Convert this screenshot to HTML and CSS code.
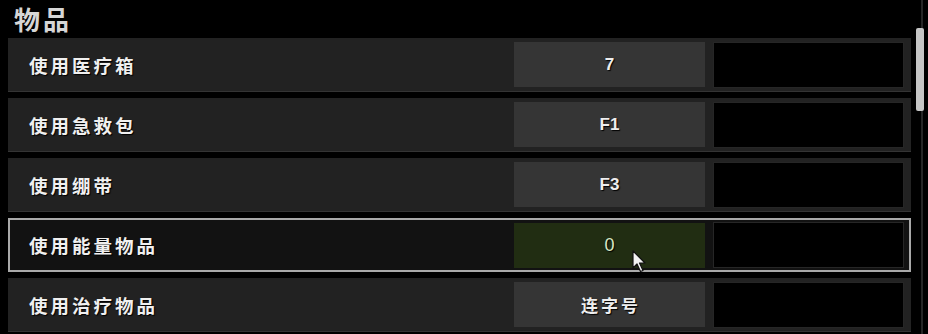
FILE: index.html
```html
<!DOCTYPE html>
<html lang="zh">
<head>
<meta charset="utf-8">
<title>物品</title>
<link rel="stylesheet" href="styles.css">
</head>
<body>
<div class="page">
  <div class="main">
    <h1 class="title">物品</h1>
    <div class="list">
      <div class="row">
        <div class="label">使用医疗箱</div>
        <div class="key">7</div>
        <div class="alt"></div>
      </div>
      <div class="row">
        <div class="label">使用急救包</div>
        <div class="key">F1</div>
        <div class="alt"></div>
      </div>
      <div class="row">
        <div class="label">使用绷带</div>
        <div class="key">F3</div>
        <div class="alt"></div>
      </div>
      <div class="row row-active">
        <div class="label">使用能量物品</div>
        <div class="key key-active">0</div>
        <div class="alt"></div>
      </div>
      <div class="row">
        <div class="label">使用治疗物品</div>
        <div class="key key-cjk">连字号</div>
        <div class="alt"></div>
      </div>
    </div>
  </div>
  <div class="scrollbar"><div class="thumb"></div></div>
</div>
<svg class="cursor" width="16" height="24" viewBox="0 0 16 24">
  <path d="M1 1 L1 18 L5 14 L8.5 21.5 L11 20.5 L7.5 13 L13 13 Z" fill="#f2f2f2" stroke="#111" stroke-width="1.2" stroke-linejoin="round"/>
</svg>
</body>
</html>
```
FILE: styles.css
```css
html, body {
  margin: 0;
  padding: 0;
  background: #000;
}
body {
  width: 928px;
  height: 334px;
  overflow: hidden;
  position: relative;
  font-family: "Noto Sans CJK SC", "Noto Sans", "Liberation Sans", sans-serif;
}
.page {
  display: flex;
  height: 334px;
}
.main {
  width: 903px;
  padding-left: 8px;
}
.title {
  margin: 0 0 0 6px;
  height: 38px;
  line-height: 38px;
  font-size: 26px;
  font-weight: 700;
  letter-spacing: 3px;
  color: #d6d6d6;
}
.list {
  display: flex;
  flex-direction: column;
  gap: 6px;
}
.row {
  box-sizing: border-box;
  height: 54px;
  display: flex;
  align-items: center;
  padding: 0 7px 0 21px;
  background: #222222;
  border-bottom: 1px solid #343434;
}
.row-active {
  background: #121212;
  border: 2px solid #a9a9a9;
  padding-left: 19px;
  padding-right: 5px;
}
.label {
  flex: 1;
  font-size: 18.5px;
  font-weight: 700;
  letter-spacing: 3px;
  color: #f0f0f0;
  text-shadow: 1px 1px 1px #000;
}
.key {
  width: 191px;
  height: 45px;
  margin-right: 8px;
  background: #353535;
  color: #eeeeee;
  display: flex;
  align-items: center;
  justify-content: center;
  font-family: "Liberation Sans", "Noto Sans CJK SC", sans-serif;
  font-size: 17px;
  font-weight: 700;
  text-shadow: 1px 1px 1px #000;
}
.key-cjk {
  font-family: "Noto Sans CJK SC", sans-serif;
  font-size: 17px;
  letter-spacing: 3px;
  padding-left: 3px;
  box-sizing: border-box;
}
.key-active {
  background: #212d12;
  color: #d8e8c4;
  font-weight: 400;
  font-size: 18px;
}
.alt {
  box-sizing: border-box;
  width: 191px;
  height: 46px;
  background: #000;
  border: 1px solid #262626;
}
.scrollbar {
  width: 17px;
  height: 334px;
  background: linear-gradient(to right, transparent 10px, #262626 10px, #262626 12px, transparent 12px);
}
.thumb {
  margin: 28px 0 0 5px;
  width: 8px;
  height: 83px;
  border-radius: 2px;
  background: #c6c6c6;
}
.cursor {
  position: absolute;
  left: 632px;
  top: 250px;
}
```
